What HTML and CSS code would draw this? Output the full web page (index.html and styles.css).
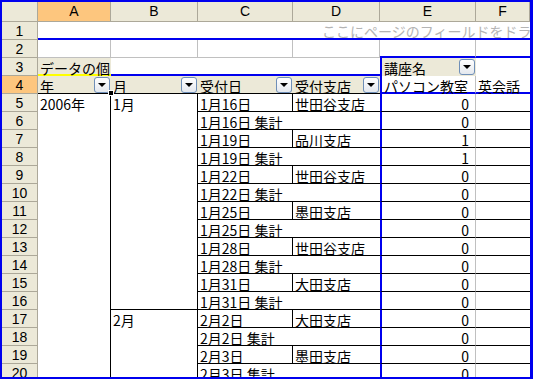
FILE: index.html
```html
<!DOCTYPE html>
<html lang="ja">
<head>
<meta charset="utf-8">
<link rel="stylesheet" href="styles.css">
</head>
<body>
<div class="frame">
<div class="sheet">
  <div class="corner"></div>
  <div class="ch sel">A</div>
  <div class="ch">B</div>
  <div class="ch">C</div>
  <div class="ch">D</div>
  <div class="ch">E</div>
  <div class="ch">F</div>

  <div class="rh">1</div>
  <div class="page">ここにページのフィールドをドラッグします</div>

  <div class="rh">2</div>
  <div class="c g"></div>
  <div class="c g"></div>
  <div class="c g"></div>
  <div class="c g"></div>
  <div class="c g pb"></div>
  <div class="c pb"></div>

  <div class="rh">3</div>
  <div class="c df">データの個</div>
  <div class="c rowtop"></div>
  <div class="c fb colfield vb"><span>講座名</span><span class="dd"></span></div>
  <div class="c"></div>

  <div class="rh sel">4</div>
  <div class="c fb hd active"><span>年</span><span class="dd"></span><span class="handle"></span></div>
  <div class="c fb hd"><span>月</span><span class="dd"></span></div>
  <div class="c fb hd"><span>受付日</span><span class="dd"></span></div>
  <div class="c fb hd"><span>受付支店</span><span class="dd"></span></div>
  <div class="c vb gr pb">パソコン教室</div>
  <div class="c pb">英会話</div>

  <div class="rh">5</div>
  <div class="c yr">2006年</div>
  <div class="c mo m1">1月</div>
  <div class="c dt">1月16日</div>
  <div class="c br">世田谷支店</div>
  <div class="c val">0</div>
  <div class="c fc"></div>

  <div class="rh">6</div>
  <div class="c sub">1月16日 集計</div>
  <div class="c val">0</div>
  <div class="c fc"></div>

  <div class="rh">7</div>
  <div class="c dt">1月19日</div>
  <div class="c br">品川支店</div>
  <div class="c val">1</div>
  <div class="c fc"></div>

  <div class="rh">8</div>
  <div class="c sub">1月19日 集計</div>
  <div class="c val">1</div>
  <div class="c fc"></div>

  <div class="rh">9</div>
  <div class="c dt">1月22日</div>
  <div class="c br">世田谷支店</div>
  <div class="c val">0</div>
  <div class="c fc"></div>

  <div class="rh">10</div>
  <div class="c sub">1月22日 集計</div>
  <div class="c val">0</div>
  <div class="c fc"></div>

  <div class="rh">11</div>
  <div class="c dt">1月25日</div>
  <div class="c br">墨田支店</div>
  <div class="c val">0</div>
  <div class="c fc"></div>

  <div class="rh">12</div>
  <div class="c sub">1月25日 集計</div>
  <div class="c val">0</div>
  <div class="c fc"></div>

  <div class="rh">13</div>
  <div class="c dt">1月28日</div>
  <div class="c br">世田谷支店</div>
  <div class="c val">0</div>
  <div class="c fc"></div>

  <div class="rh">14</div>
  <div class="c sub">1月28日 集計</div>
  <div class="c val">0</div>
  <div class="c fc"></div>

  <div class="rh">15</div>
  <div class="c dt">1月31日</div>
  <div class="c br">大田支店</div>
  <div class="c val">0</div>
  <div class="c fc"></div>

  <div class="rh">16</div>
  <div class="c sub">1月31日 集計</div>
  <div class="c val">0</div>
  <div class="c fc"></div>

  <div class="rh">17</div>
  <div class="c mo m2">2月</div>
  <div class="c dt">2月2日</div>
  <div class="c br">大田支店</div>
  <div class="c val">0</div>
  <div class="c fc"></div>

  <div class="rh">18</div>
  <div class="c sub">2月2日 集計</div>
  <div class="c val">0</div>
  <div class="c fc"></div>

  <div class="rh">19</div>
  <div class="c dt">2月3日</div>
  <div class="c br">墨田支店</div>
  <div class="c val">0</div>
  <div class="c fc"></div>

  <div class="rh">20</div>
  <div class="c sub">2月3日 集計</div>
  <div class="c val">0</div>
  <div class="c fc"></div>
</div>
</div>
</body>
</html>
```

FILE: styles.css
```css
* { box-sizing: border-box; }

body {
  margin: 0;
  background: #fff;
  color: #000;
  font-family: "Noto Sans CJK JP", "Liberation Sans", sans-serif;
  font-size: 14px;
}

.frame {
  width: 533px;
  height: 379px;
  border-style: solid;
  border-color: #0000ee;
  border-width: 2px 3px 2px 2px;
  overflow: hidden;
}

.sheet {
  display: grid;
  grid-template-columns: 36px 73px 87px 95px 87px 96px 54px;
  grid-template-rows: 20px;
  grid-auto-rows: 18px;
}

/* headers */
.corner, .ch, .rh {
  background: #ece9d8;
  border-right: 1px solid #aca899;
  border-bottom: 1px solid #aca899;
  font-family: "Liberation Sans", sans-serif;
  font-size: 14px;
  text-align: center;
  color: #000;
}
.ch { line-height: 19px; }
.rh { line-height: 17px; padding-top: 1px; }
.ch.sel, .rh.sel { background: #fdc67e; }

/* generic cell */
.c {
  line-height: 18px;
  padding: 1px 2px 0;
  white-space: nowrap;
}
.g {
  border-right: 1px solid #c0c0c0;
  border-bottom: 1px solid #c0c0c0;
}
.pb { border-bottom: 2px solid #0000ee; }
.gr { border-right: 1px solid #c0c0c0; }
.vb { border-left: 2px solid #0000ee; }

.page {
  grid-column: span 6;
  border-bottom: 2px solid #0000ee;
  color: #b4b4b4;
  white-space: nowrap;
  overflow: hidden;
  line-height: 18px;
  padding-left: 284px;
}

.df {
  background: #ece9d8;
  border-bottom: 2px solid #ffff00;
}
.rowtop {
  grid-column: span 3;
  border-bottom: 2px solid #0000ee;
}

/* field buttons */
.fb {
  background: #ece9d8;
  display: flex;
  justify-content: space-between;
  align-items: flex-start;
  padding: 1px 1px 0 2px;
}
.hd { border-bottom: 1px solid #000; }
.active { position: relative; }
.handle {
  position: absolute;
  right: -3px;
  bottom: -3px;
  width: 6px;
  height: 6px;
  background: #000;
  border: 1px solid #fff;
  z-index: 2;
}
.dd {
  flex: none;
  width: 16px;
  height: 16px;
  border: 1px solid #6f8fb8;
  border-radius: 3px;
  background: linear-gradient(#ffffff, #e4e8ee);
  position: relative;
}
.dd::after {
  content: "";
  position: absolute;
  left: 3px;
  top: 5px;
  border-left: 4px solid transparent;
  border-right: 4px solid transparent;
  border-top: 4px solid #000;
}

/* pivot body */
.yr {
  grid-row: span 16;
  border-right: 1px solid #000;
}
.mo { border-right: 1px solid #000; }
.m1 { grid-row: span 12; border-bottom: 1px solid #000; }
.m2 { grid-row: span 4; }
.dt {
  border-right: 1px solid #000;
  border-bottom: 1px solid #000;
}
.br { border-bottom: 1px solid #000; }
.sub {
  grid-column: span 2;
  border-bottom: 1px solid #000;
}
.val {
  border-left: 2px solid #0000ee;
  border-right: 1px solid #c0c0c0;
  border-bottom: 1px solid #000;
  text-align: right;
  padding-right: 6px;
}
.fc { border-bottom: 1px solid #000; }
```
